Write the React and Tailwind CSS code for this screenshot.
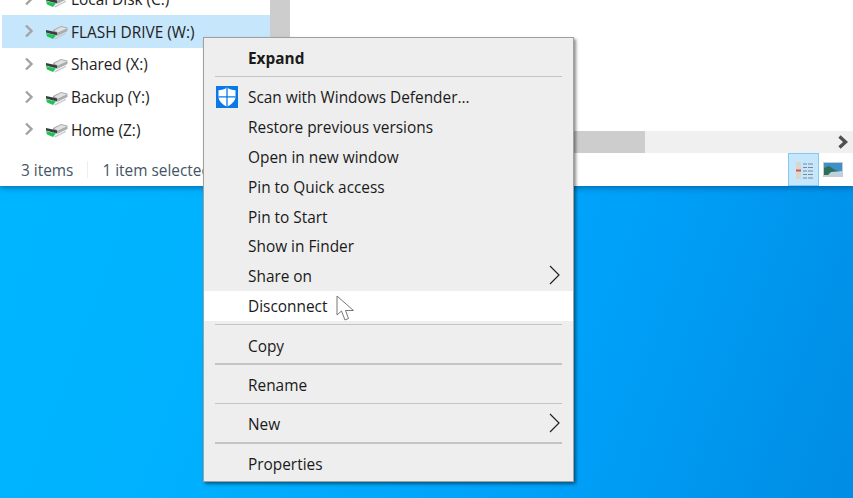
const drives = [
  { label: 'FLASH DRIVE (W:)', selected: true },
  { label: 'Shared (X:)' },
  { label: 'Backup (Y:)' },
  { label: 'Home (Z:)' },
];

const DriveIcon = () => (
  <svg width="22" height="15" viewBox="0 0 22 15" className="shrink-0">
    <path d="M7 5 L15 1 L21.5 2.5 L21.5 6 L11 11 L7 9 Z" fill="#a9adae" />
    <path d="M8.5 5.5 L15 2 L21 3.2 L12 7.5 Z" fill="#dfe1e2" />
    <path d="M0 5 L7 6.5 L11 7.5 L11 10 L7 9.5 L0 7.5 Z" fill="#3c3c3c" />
    <path d="M0 8 L10 10.5 L7 14 L1 11.5 Z" fill="#1fc45a" />
    <path d="M8 13.5 L20 7.5 L20 9 L9.5 14.5 Z" fill="#c9cccd" />
  </svg>
);

const Expander = () => (
  <svg width="10" height="14" viewBox="0 0 10 14" className="shrink-0">
    <path d="M2 1.5 L7.5 7 L2 12.5" fill="none" stroke="#a3a3a3" strokeWidth="2.4" />
  </svg>
);

const NavRow = ({ label, selected }) => (
  <div className={`flex h-[32.7px] items-center ${selected ? 'bg-[#c6e6fc]' : ''}`}>
    <div className="ml-[22px] flex items-center">
      <Expander />
      <div className="ml-[12px] mt-[3px]">
        <DriveIcon />
      </div>
      <span className="ml-[3px] mt-[2px] whitespace-nowrap text-[15.4px] text-[#222]">{label}</span>
    </div>
  </div>
);

const DefenderIcon = () => (
  <svg width="22" height="22" viewBox="0 0 22 22" className="shrink-0">
    <rect width="22" height="22" fill="#0a78e6" />
    <path d="M11 1.5 C8.5 3.4 5.5 4.2 2.5 4.2 L2.5 10.5 C2.5 14.8 6 18.4 11 20.5 C16 18.4 19.5 14.8 19.5 10.5 L19.5 4.2 C16.5 4.2 13.5 3.4 11 1.5 Z" fill="#fff" />
    <path d="M11 1.5 V20.5 M2.5 10.8 H19.5" stroke="#0a78e6" strokeWidth="1.3" />
  </svg>
);

const Separator = () => (
  <div className="h-[9.6px] pt-[3px]">
    <div className="mx-[11px] h-[1.5px] bg-[#c4c4c4]" />
  </div>
);

const MenuItem = ({ label, bold, icon, arrow, hover }) => (
  <div className={`relative flex h-[29.86px] items-center pl-[44px] text-[15.4px] leading-none text-[#1a1a1a] ${hover ? 'bg-white' : ''} ${bold ? 'font-bold' : ''}`}>
    {icon && <div className="absolute left-[12px] top-[4px]">{icon}</div>}
    <span className="mt-[2px] whitespace-nowrap">{label}</span>
    {arrow && (
      <svg width="11" height="20" viewBox="0 0 11 20" className="absolute right-[13px] top-[4px]">
        <path d="M1 1 L10 10 L1 19" fill="none" stroke="#222" strokeWidth="1.2" />
      </svg>
    )}
  </div>
);

const Cursor = () => (
  <svg width="19" height="28" viewBox="0 0 19 28" className="absolute left-[132px] top-[257px]">
    <path d="M1 1 L1 20 L5.5 16 L9 25 L12.5 23.5 L9.5 15.5 L17.5 15.5 Z" fill="#fff" stroke="#777" strokeWidth="1" />
  </svg>
);

export default function App() {
  return (
    <div className="relative h-[498px] w-[853px] overflow-hidden bg-[linear-gradient(110deg,#00b6ff_0%,#00b2ff_30%,#00a0f8_70%,#008ce4_100%)] font-['Open_Sans','Noto_Sans',sans-serif]">
      {/* explorer window */}
      <div className="flex h-[186px] flex-col bg-white shadow-[0_2px_6px_rgba(0,60,120,0.55)]">
        <div className="flex h-[153px]">
          <div className="w-[270px] pl-[2px]">
            <div className="-mt-[17.7px] flex h-[32.7px] items-center">
              <div className="ml-[22px] flex items-center">
                <Expander />
                <div className="ml-[12px] mt-[3px]">
                  <DriveIcon />
                </div>
                <span className="ml-[3px] mt-[2px] whitespace-nowrap text-[15.4px] text-[#222]">Local Disk (C:)</span>
              </div>
            </div>
            {drives.map((d) => (
              <NavRow key={d.label} label={d.label} selected={d.selected} />
            ))}
          </div>
          <div className="w-[20px] bg-[#cdcdcd]" />
          <div className="flex flex-1 flex-col justify-end">
            <div className="flex h-[22px] items-center bg-[#f0f0f0]">
              <div className="h-full w-[355px] bg-[#cdcdcd]" />
              <div className="flex-1" />
              <svg width="12" height="14" viewBox="0 0 12 14" className="mr-[4px]">
                <path d="M2.5 1.5 L8.5 7 L2.5 12.5" fill="none" stroke="#505050" strokeWidth="3.4" />
              </svg>
            </div>
          </div>
        </div>
        <div className="flex flex-1 items-center text-[15.4px] text-[#445566]">
          <span className="ml-[21px] mt-[2px]">3 items</span>
          <div className="ml-[14px] h-[17px] w-px bg-[#eeeeee]" />
          <span className="ml-[14px] mt-[2px] whitespace-nowrap">1 item selected</span>
          <div className="flex-1" />
          <div className="flex h-[33px] w-[31px] items-center justify-center border border-[#7fcdf0] bg-[#c6e6fc]">
            <svg width="20" height="20" viewBox="0 0 20 20">
              <path d="M2 2 H7 V19 H2 Z" fill="#d8d8c8" />
              <path d="M2 9.5 H7 V11.5 H2 Z" fill="#e05050" />
              <path d="M9 4 H13 M14 4 H19 M9 7.5 H13 M14 7.5 H19 M9 11 H13 M14 11 H19 M9 14.5 H13 M14 14.5 H19 M9 18 H13 M14 18 H19" stroke="#778899" strokeWidth="1" />
            </svg>
          </div>
          <div className="ml-[4px] mr-[10px] flex h-[32px] w-[20px] items-center">
            <svg width="20" height="15" viewBox="0 0 20 15">
              <rect width="20" height="15" fill="#c8ccd0" />
              <rect x="1" y="1" width="18" height="12" fill="#3f8fc8" />
              <path d="M1 6 L6 4 L12 8 L19 10 V13 H1 Z" fill="#2f6f55" />
              <path d="M8 10 L19 9 V13 H5 Z" fill="#b8d4e4" />
            </svg>
          </div>
        </div>
      </div>

      {/* context menu */}
      <div className="absolute left-[203px] top-[37px] h-[445px] w-[371px] border border-[#a0a0a0] bg-[#eeeeee] pt-[5px] shadow-[2px_2px_3px_rgba(0,0,0,0.45)]">
        <MenuItem label="Expand" bold />
        <div className="h-[9px] pt-[3px]">
          <div className="mx-[11px] h-[1.5px] bg-[#c4c4c4]" />
        </div>
        <MenuItem label="Scan with Windows Defender..." icon={<DefenderIcon />} />
        <MenuItem label="Restore previous versions" />
        <MenuItem label="Open in new window" />
        <MenuItem label="Pin to Quick access" />
        <MenuItem label="Pin to Start" />
        <MenuItem label="Show in Finder" />
        <MenuItem label="Share on" arrow />
        <MenuItem label="Disconnect" hover />
        <Separator />
        <MenuItem label="Copy" />
        <Separator />
        <MenuItem label="Rename" />
        <Separator />
        <MenuItem label="New" arrow />
        <Separator />
        <MenuItem label="Properties" />
        <Cursor />
      </div>
    </div>
  );
}
